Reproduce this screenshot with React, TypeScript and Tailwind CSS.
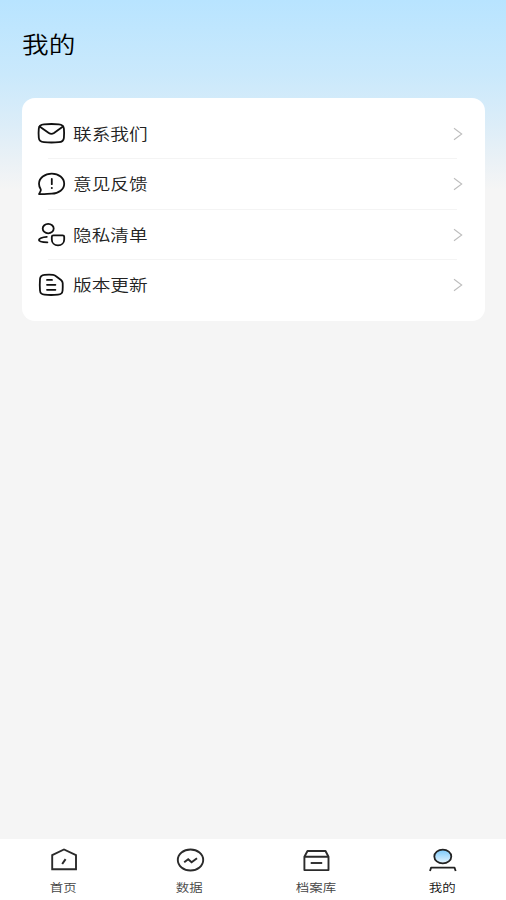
import type { ReactNode } from "react"
import { clsx } from "clsx"

const MailIcon = () => (
  <svg viewBox="0 0 30 28" className="h-7 w-[30px]" fill="none" stroke="#111" strokeWidth="1.8" strokeLinecap="round" strokeLinejoin="round">
    <path d="M2.8 8.600C3 5.800 4.800 4.700 8 4.400C13 3.900 18 3.900 22.800 4.400C26 4.700 27.600 5.800 27.900 8.600C28.200 11.600 28.200 15 27.900 17.800C27.600 20.800 26 21.900 22.800 22.200C18 22.600 13 22.600 8 22.200C4.800 21.900 3 20.800 2.800 17.800C2.500 15 2.500 11.600 2.800 8.600Z" />
    <path d="M3.6 6.400L12.800 13Q15.400 14.800 18 13L27 6.400" />
  </svg>
)

const FeedbackIcon = () => (
  <svg viewBox="0 0 30 28" className="h-7 w-[30px]" fill="none" stroke="#111" strokeWidth="1.8" strokeLinecap="round" strokeLinejoin="round">
    <path d="M3 24C8 24.300 12 23.700 15.800 23.700C22.800 23.700 28.200 19.300 28.200 13.700S22.800 3.600 15.800 3.600S3 8.100 3 13.700C3 16.200 3.800 18 4.800 19.400C5.400 20.800 3.600 22.600 3 24Z" />
    <path d="M15.800 9V14.200" />
    <path d="M15.800 17.900V18" strokeWidth="2" />
  </svg>
)

const PrivacyIcon = () => (
  <svg viewBox="0 0 30 28" className="h-7 w-[30px]" fill="none" stroke="#111" strokeWidth="1.8" strokeLinecap="round" strokeLinejoin="round">
    <ellipse cx="12.200" cy="7.600" rx="5.500" ry="4.700" />
    <path d="M10.800 15.800C6.300 16 2.900 17.600 2.900 19.100C2.900 20.600 5 21.300 11.400 21.300" />
    <path d="M17.400 14.300H26.600Q28.200 14.300 28.200 15.800V18.400C28.200 22 25.600 24.300 22 24.300S15.800 22 15.800 18.400V15.800Q15.800 14.300 17.400 14.300Z" />
  </svg>
)

const VersionIcon = () => (
  <svg viewBox="0 0 30 28" className="h-7 w-[30px]" fill="none" stroke="#111" strokeWidth="1.8" strokeLinecap="round" strokeLinejoin="round">
    <path d="M8.500 3.800C12 3.500 14.500 3.500 17 3.800Q18.500 4 19.700 5L25 9Q26.600 10.300 26.700 12.100C26.800 15 26.800 17 26.600 19.500C26.400 22.300 24.800 23.500 22 23.700C17 24.100 13 24.100 8.500 23.700C5.600 23.500 4.200 22.300 4 19.500C3.700 16 3.700 12 4 8C4.200 5.200 5.600 4 8.500 3.800Z" />
    <path d="M11 8.900H16M11 13.800H19.400M11 18.800H19.400" />
  </svg>
)

const ChevronIcon = () => (
  <svg viewBox="0 0 10 14" className="h-3.5 w-2.5" fill="none" stroke="#bdbdbd" strokeWidth="1.1">
    <path d="M1 1.200L8.700 7L1 12.800" />
  </svg>
)

const HomeIcon = () => (
  <svg viewBox="0 0 30 26" className="h-[26px] w-[30px]" fill="none" stroke="#2b2b2b" strokeWidth="1.9">
    <path d="M4.200 9.200L16 3.500L28 9.200V23.200H4.200Z" />
    <path d="M17.600 13.200L14.200 18" strokeWidth="2" />
  </svg>
)

const DataIcon = () => (
  <svg viewBox="0 0 30 26" className="h-[26px] w-[30px]" fill="none" stroke="#2b2b2b" strokeWidth="1.9">
    <ellipse cx="15.500" cy="14" rx="12.700" ry="10.500" />
    <path d="M9.200 16.200L13.200 13.200L16.600 16.200L22 12.200" strokeWidth="2" />
  </svg>
)

const ArchiveIcon = () => (
  <svg viewBox="0 0 30 26" className="h-[26px] w-[30px]" fill="none" stroke="#2b2b2b" strokeWidth="1.9" strokeLinejoin="round">
    <path d="M3.400 10.800L6.500 5H24.500L27.500 10.800V24.100H3.400ZM3.400 10.800H27.500" />
    <path d="M9.700 17H21.200" />
  </svg>
)

const MineIcon = () => (
  <svg viewBox="0 0 30 26" className="h-[26px] w-[30px]" fill="none" stroke="#222" strokeWidth="1.8" strokeLinejoin="round">
    <defs>
      <linearGradient id="head" x1="0" y1="0" x2="0" y2="1">
        <stop offset="0" stopColor="#79c8fa" />
        <stop offset="1" stopColor="#e9f6fe" />
      </linearGradient>
    </defs>
    <ellipse cx="14.800" cy="10.500" rx="8.500" ry="6.900" fill="url(#head)" />
    <path d="M2 25L3.100 21.600H26.500L27.700 25" />
  </svg>
)

const menu: { label: string; icon: ReactNode }[] = [
  { label: "联系我们", icon: <MailIcon /> },
  { label: "意见反馈", icon: <FeedbackIcon /> },
  { label: "隐私清单", icon: <PrivacyIcon /> },
  { label: "版本更新", icon: <VersionIcon /> },
]

const tabs: { label: string; icon: ReactNode; active?: boolean }[] = [
  { label: "首页", icon: <HomeIcon /> },
  { label: "数据", icon: <DataIcon /> },
  { label: "档案库", icon: <ArchiveIcon /> },
  { label: "我的", icon: <MineIcon />, active: true },
]

export default function App() {
  return (
    <div className="flex h-[900px] w-full flex-col bg-[#f5f5f5] font-['Noto_Sans_CJK_SC',sans-serif] font-[350]">
      <main className="flex-1 bg-[linear-gradient(180deg,#b8e4ff_0px,#cae9fc_75px,#dcedf8_125px,#eaf1f6_160px,#f5f5f5_190px)] px-[21.5px] pt-[27px]">
        <h1 className="h-[70.5px] w-fit origin-left scale-x-[1.19] text-[22.4px] leading-8 font-[350] text-black">我的</h1>

        <section className="h-[223px] rounded-[13px] bg-white pt-[11px]">
          {menu.map((item, i) => (
            <div key={item.label} className="relative">
              <button className="flex h-[50.5px] w-full items-center pr-[22px] pl-[14.5px]">
                {item.icon}
                <span className="ml-[7px] origin-left scale-x-[1.19] text-[15.7px] leading-6 text-[#222]">{item.label}</span>
                <span className="ml-auto">
                  <ChevronIcon />
                </span>
              </button>
              {i < menu.length - 1 && <div className="absolute right-7 bottom-0 left-[26px] h-px bg-[#f4f4f4]" />}
            </div>
          ))}
        </section>
      </main>

      <nav className="flex h-[61.5px] bg-white">
        {tabs.map((tab) => (
          <button key={tab.label} className="flex flex-1 flex-col items-center pt-[7.5px]">
            {tab.icon}
            <span
              className={clsx(
                "mt-[7px] scale-x-[1.19] text-[11.3px] leading-4",
                tab.active ? "text-[#111]" : "text-[#444]",
              )}
            >
              {tab.label}
            </span>
          </button>
        ))}
      </nav>
    </div>
  )
}
